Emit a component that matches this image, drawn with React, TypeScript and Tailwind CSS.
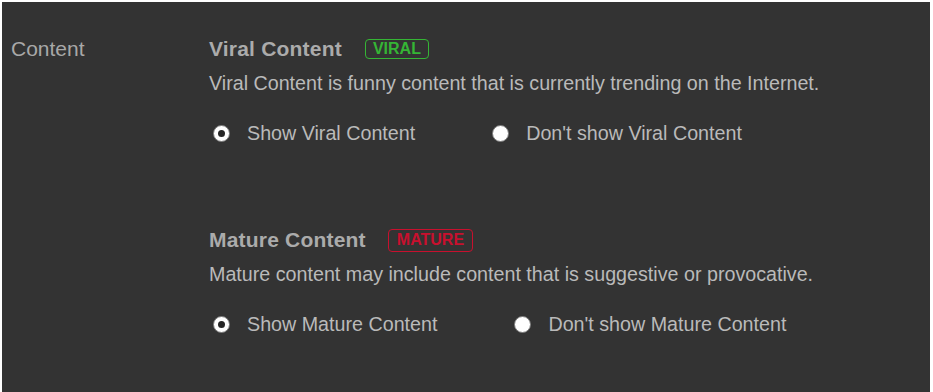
import type { ReactNode } from "react";

const font = { fontFamily: '"Liberation Sans", Arial, sans-serif' };

function Radio({ checked }: { checked?: boolean }) {
  return (
    <span className="flex h-[17px] w-[17px] items-center justify-center rounded-full border-[1.5px] border-[#7a7a7a] bg-white">
      {checked && <span className="h-[7px] w-[7px] rounded-full bg-[#262626]" />}
    </span>
  );
}

function Option({ label, checked }: { label: string; checked?: boolean }) {
  return (
    <label className="flex items-center gap-[17px]">
      <Radio checked={checked} />
      <span className="text-[19.7px] leading-[24px] text-[#bababa]">{label}</span>
    </label>
  );
}

function Section({
  title,
  badge,
  description,
  options,
  className,
}: {
  title: string;
  badge: ReactNode;
  description: string;
  options: [string, string];
  className?: string;
}) {
  return (
    <div className={className}>
      <div className="flex h-[24px] items-center">
        <h3 className="text-[21px] font-bold leading-[24px] tracking-[0.2px] text-[#ababab]">{title}</h3>
        {badge}
      </div>
      <p className="mt-[10px] text-[19.7px] leading-[24px] text-[#bababa]">{description}</p>
      <div className="mt-[26px] flex h-[24px] items-center gap-[77px] pl-[4px]">
        <Option label={options[0]} checked />
        <Option label={options[1]} />
      </div>
    </div>
  );
}

export default function App() {
  return (
    <div
      style={font}
      className="flex h-[392px] w-[933px] border-t-2 border-r-[3px] border-l-2 border-white bg-[#333333] pt-[35px]"
    >
      <div className="w-[207px] shrink-0 pl-[9px] text-[21px] leading-[24px] text-[#a8a8a8]">Content</div>
      <div className="flex flex-col">
        <Section
          title="Viral Content"
          badge={
            <span className="ml-[23px] flex h-[20px] items-center rounded-[4px] border border-[#35b535] px-[7px] text-[16px] font-bold text-[#35b535]">
              VIRAL
            </span>
          }
          description="Viral Content is funny content that is currently trending on the Internet."
          options={["Show Viral Content", "Don't show Viral Content"]}
        />
        <Section
          className="mt-[83px]"
          title="Mature Content"
          badge={
            <span className="ml-[22px] flex h-[23px] items-center rounded-[4px] border border-[#c8102e] px-[8px] text-[16px] font-bold text-[#c8102e]">
              MATURE
            </span>
          }
          description="Mature content may include content that is suggestive or provocative."
          options={["Show Mature Content", "Don't show Mature Content"]}
        />
      </div>
    </div>
  );
}
